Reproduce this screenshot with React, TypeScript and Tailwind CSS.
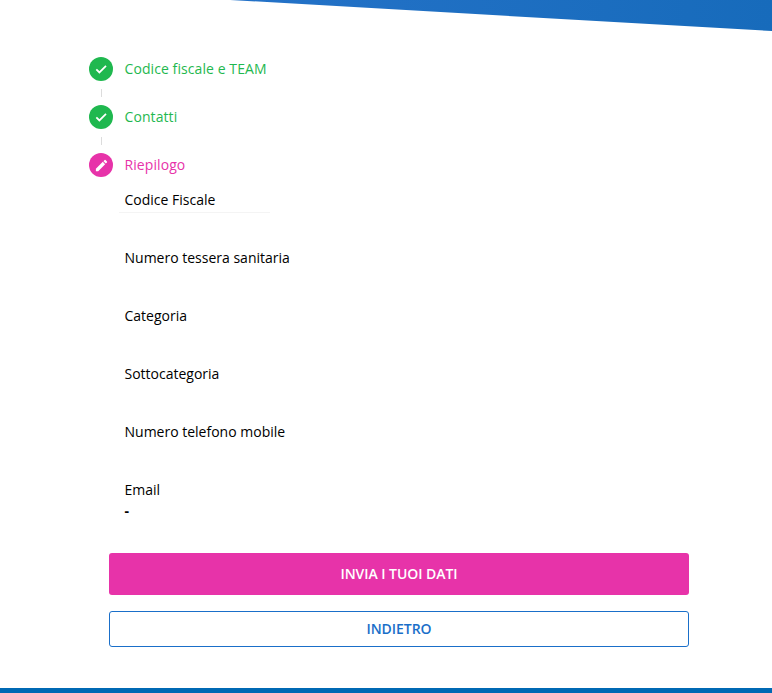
import React from "react";

function Check() {
  return (
    <svg width="16" height="16" viewBox="0 0 24 24" fill="none" stroke="#fff" strokeWidth="2.6">
      <path d="M5 12.5l4.6 4.6L19.5 7.2" />
    </svg>
  );
}

function Pencil() {
  return (
    <svg width="15" height="15" viewBox="0 0 24 24" fill="#fff">
      <path d="M3 17.25V21h3.75L17.81 9.94l-3.75-3.75L3 17.25zM20.71 7.04a1 1 0 0 0 0-1.41l-2.34-2.34a1 1 0 0 0-1.41 0l-1.83 1.83 3.75 3.75 1.83-1.83z" />
    </svg>
  );
}

function Step({ label, color, text, icon }: { label: string; color: string; text: string; icon: React.ReactNode }) {
  return (
    <div className="flex h-6 items-center gap-[11.5px]">
      <div className={`flex h-6 w-6 items-center justify-center rounded-full ${color}`}>{icon}</div>
      <span className={`text-sm tracking-[0.08px] ${text}`}>{label}</span>
    </div>
  );
}

function Connector() {
  return (
    <div className="flex h-6 w-6 items-center justify-center">
      <div className="h-2 w-px bg-[#dcdcdc]" />
    </div>
  );
}

const fields = ["Numero tessera sanitaria", "Categoria", "Sottocategoria", "Numero telefono mobile"];

export default function App() {
  return (
    <div
      className="relative flex h-[693px] w-full flex-col overflow-hidden bg-white text-sm text-black"
      style={{ fontFamily: '"Open Sans", sans-serif' }}
    >
      <svg className="absolute right-0 top-0" width="542" height="31" viewBox="0 0 542 31">
        <defs>
          <linearGradient id="wedge" x1="0" y1="0" x2="1" y2="0">
            <stop offset="0" stopColor="#2472c8" />
            <stop offset="1" stopColor="#176bbb" />
          </linearGradient>
        </defs>
        <polygon points="0,0 542,0 542,31" fill="url(#wedge)" />
      </svg>

      <div className="flex flex-col pl-[89px] pt-[57px]">
        <Step label="Codice fiscale e TEAM" color="bg-[#1fb84f]" text="text-[#1fb84f]" icon={<Check />} />
        <Connector />
        <Step label="Contatti" color="bg-[#1fb84f]" text="text-[#1fb84f]" icon={<Check />} />
        <Connector />
        <Step label="Riepilogo" color="bg-[#e733a9]" text="text-[#e733a9]" icon={<Pencil />} />
      </div>

      <div className="flex flex-col pl-[124.5px] pt-[13px]">
        <div className="relative h-[58px] leading-5">
          Codice Fiscale
          <div className="absolute left-[-6px] top-[22px] h-px w-[151px] bg-[#f4f4f4]" />
        </div>
        {fields.map((f) => (
          <div key={f} className="h-[58px] leading-5">
            {f}
          </div>
        ))}
        <div className="leading-5">Email</div>
        <div className="font-bold leading-5 mt-px">-</div>
      </div>

      <div className="flex flex-col gap-4 pl-[109px] pr-[83px] pt-[32px]">
        <button className="flex h-[42px] items-center justify-center rounded-[3px] bg-[#e733a9] text-sm font-semibold tracking-[-0.05px] text-white">
          INVIA I TUOI DATI
        </button>
        <button className="flex h-9 items-center justify-center rounded-[3px] border border-[#1a6fc9] bg-white text-sm font-semibold tracking-[-0.05px] text-[#1a6fc9]">
          INDIETRO
        </button>
      </div>

      <div className="mt-auto h-[5px] bg-[#0069b4]" />
    </div>
  );
}
